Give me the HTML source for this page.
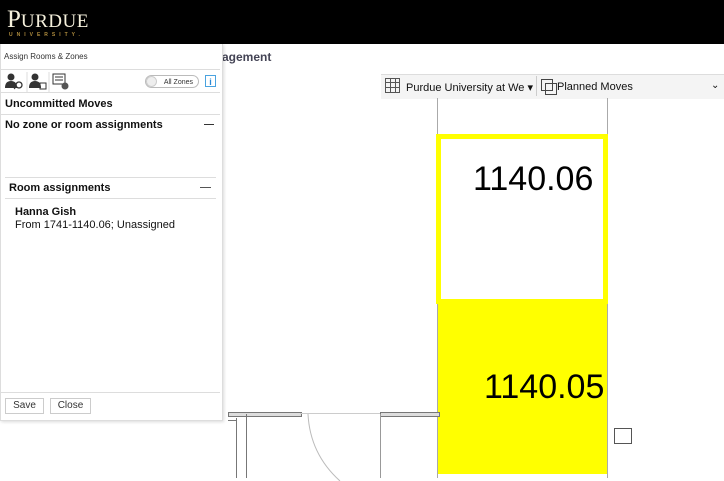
<!DOCTYPE html>
<html><head><style>
body{margin:0;width:724px;height:481px;position:relative;overflow:hidden;background:#fff;font-family:"Liberation Sans",sans-serif;}
.a{position:absolute;}
.hdr{left:0;top:0;width:724px;height:44px;background:#000;}
.t{font-size:11px;color:#111;white-space:nowrap;}
</style></head><body>
<div class="a hdr"></div>
<div class="a" style="left:7px;top:6px;color:#f5f0dc;font-family:'Liberation Serif',serif;font-size:25px;">P<span style="font-size:19px;letter-spacing:0.5px">URDUE</span></div>
<div class="a" style="left:9px;top:32px;color:#b08d3e;font-size:5px;letter-spacing:4px;font-weight:bold;">UNIVERSITY.</div>

<div class="a" style="left:222px;top:50px;font-size:12px;font-weight:bold;color:#445;">agement</div>

<!-- toolbar -->
<div class="a" style="left:381px;top:74px;width:343px;height:24px;background:#f4f4f4;border-top:1px solid #ddd;"></div>
<div class="a" style="left:385px;top:78px;width:15px;height:15px;border:1px solid #555;box-sizing:border-box;background:repeating-linear-gradient(90deg,transparent 0 4px,#555 4px 5px),repeating-linear-gradient(0deg,transparent 0 4px,#555 4px 5px);"></div>
<div class="a t" style="left:406px;top:81px;">Purdue University at We ▾</div>
<div class="a" style="left:536px;top:76px;width:1px;height:20px;background:#ccc;"></div>
<div class="a" style="left:541px;top:79px;width:10px;height:10px;border:1px solid #444;"></div>
<div class="a" style="left:545px;top:83px;width:10px;height:10px;border:1px solid #444;"></div>
<div class="a t" style="left:557px;top:81px;">Planned Moves</div>
<div class="a t" style="left:711px;top:80px;font-size:10px;">⌄</div>

<!-- floor plan -->
<div class="a" style="left:437px;top:98px;width:1px;height:380px;background:#aaa;"></div>
<div class="a" style="left:607px;top:98px;width:1px;height:380px;background:#aaa;"></div>
<div class="a" style="left:436px;top:134px;width:172px;height:170px;border:5px solid #ffff00;box-sizing:border-box;background:#fff;"></div>
<div class="a" style="left:473px;top:160px;font-size:34px;color:#000;">1140.06</div>
<div class="a" style="left:484px;top:368px;font-size:34px;color:#000;"></div>
<div class="a" style="left:438px;top:304px;width:169px;height:170px;background:#ffff00;"></div>
<div class="a" style="left:484px;top:368px;font-size:34px;color:#000;">1140.05</div>
<div class="a" style="left:614px;top:428px;width:18px;height:16px;border:1px solid #555;box-sizing:border-box;"></div>
<div class="a" style="left:228px;top:412px;width:72px;height:3px;border:1px solid #777;background:#ddd;"></div>
<div class="a" style="left:380px;top:412px;width:58px;height:3px;border:1px solid #777;background:#ddd;"></div>
<div class="a" style="left:300px;top:413px;width:80px;height:1px;background:#ccc;"></div>
<div class="a" style="left:236px;top:418px;width:1px;height:60px;background:#777;"></div>
<div class="a" style="left:246px;top:414px;width:1px;height:64px;background:#777;"></div>
<div class="a" style="left:380px;top:414px;width:1px;height:64px;background:#999;"></div>
<div class="a" style="left:228px;top:420px;width:9px;height:1px;background:#777;"></div>
<svg class="a" style="left:300px;top:414px" width="60" height="67"><path d="M8 0 Q10 40 40 67" stroke="#bbb" fill="none"/></svg>

<!-- panel -->
<div class="a" style="left:0;top:44px;width:221px;height:376px;background:#fff;border:1px solid #ddd;border-top:none;box-shadow:1px 1px 3px rgba(0,0,0,.15);"></div>
<div class="a" style="left:4px;top:52px;font-size:8px;color:#333;">Assign Rooms &amp; Zones</div>
<div class="a" style="left:1px;top:69px;width:219px;height:1px;background:#ddd;"></div>
<svg class="a" style="left:4px;top:72px" width="70" height="20">
<circle cx="7" cy="5" r="3.5" fill="#333"/><path d="M1 16 Q1 9 7 9 Q13 9 13 16Z" fill="#333"/><circle cx="15" cy="13" r="3" fill="none" stroke="#333" stroke-width="1.3"/><line x1="12" y1="15" x2="10" y2="17" stroke="#333"/>
<line x1="23" y1="0" x2="23" y2="20" stroke="#ddd"/>
<circle cx="31" cy="5" r="3.5" fill="#333"/><path d="M25 16 Q25 9 31 9 Q37 9 37 16Z" fill="#333"/><rect x="36" y="11" width="6" height="6" fill="none" stroke="#333"/>
<line x1="45" y1="0" x2="45" y2="20" stroke="#ddd"/>
<rect x="49" y="2" width="12" height="10" fill="none" stroke="#333"/><line x1="51" y1="5" x2="59" y2="5" stroke="#333"/><line x1="51" y1="8" x2="59" y2="8" stroke="#333"/><circle cx="61" cy="14" r="3.5" fill="#555"/>
</svg>
<div class="a" style="left:145px;top:75px;width:54px;height:13px;border:1px solid #bbb;border-radius:8px;font-size:7px;color:#333;text-align:right;line-height:13px;box-sizing:border-box;padding-right:5px;">All Zones</div>
<div class="a" style="left:146px;top:76px;width:11px;height:11px;border-radius:6px;background:#eee;border:1px solid #ccc;box-sizing:border-box;"></div>
<div class="a" style="left:205px;top:75px;width:11px;height:12px;border:1px solid #4aa3df;color:#2a8ad6;font-size:9px;text-align:center;line-height:12px;font-weight:bold;box-sizing:border-box;">i</div>
<div class="a" style="left:1px;top:92px;width:219px;height:1px;background:#ddd;"></div>
<div class="a t" style="left:5px;top:98px;font-weight:bold;">Uncommitted Moves</div>
<div class="a" style="left:1px;top:114px;width:219px;height:1px;background:#ddd;"></div>
<div class="a t" style="left:5px;top:119px;font-weight:bold;">No zone or room assignments</div>
<div class="a" style="left:204px;top:124px;width:10px;height:1px;background:#333;"></div>
<div class="a" style="left:5px;top:177px;width:211px;height:1px;background:#ddd;"></div>
<div class="a t" style="left:9px;top:182px;font-weight:bold;">Room assignments</div>
<div class="a" style="left:200px;top:187px;width:11px;height:1px;background:#555;"></div>
<div class="a" style="left:5px;top:198px;width:211px;height:1px;background:#ddd;"></div>
<div class="a t" style="left:15px;top:206px;font-weight:bold;">Hanna Gish</div>
<div class="a t" style="left:15px;top:219px;">From 1741-1140.06; Unassigned</div>
<div class="a" style="left:1px;top:392px;width:219px;height:1px;background:#ddd;"></div>
<div class="a" style="left:5px;top:398px;width:39px;height:16px;border:1px solid #ccc;box-sizing:border-box;font-size:10px;text-align:center;line-height:14px;color:#333;">Save</div>
<div class="a" style="left:50px;top:398px;width:41px;height:16px;border:1px solid #ccc;box-sizing:border-box;font-size:10px;text-align:center;line-height:14px;color:#333;">Close</div>
</body></html>
